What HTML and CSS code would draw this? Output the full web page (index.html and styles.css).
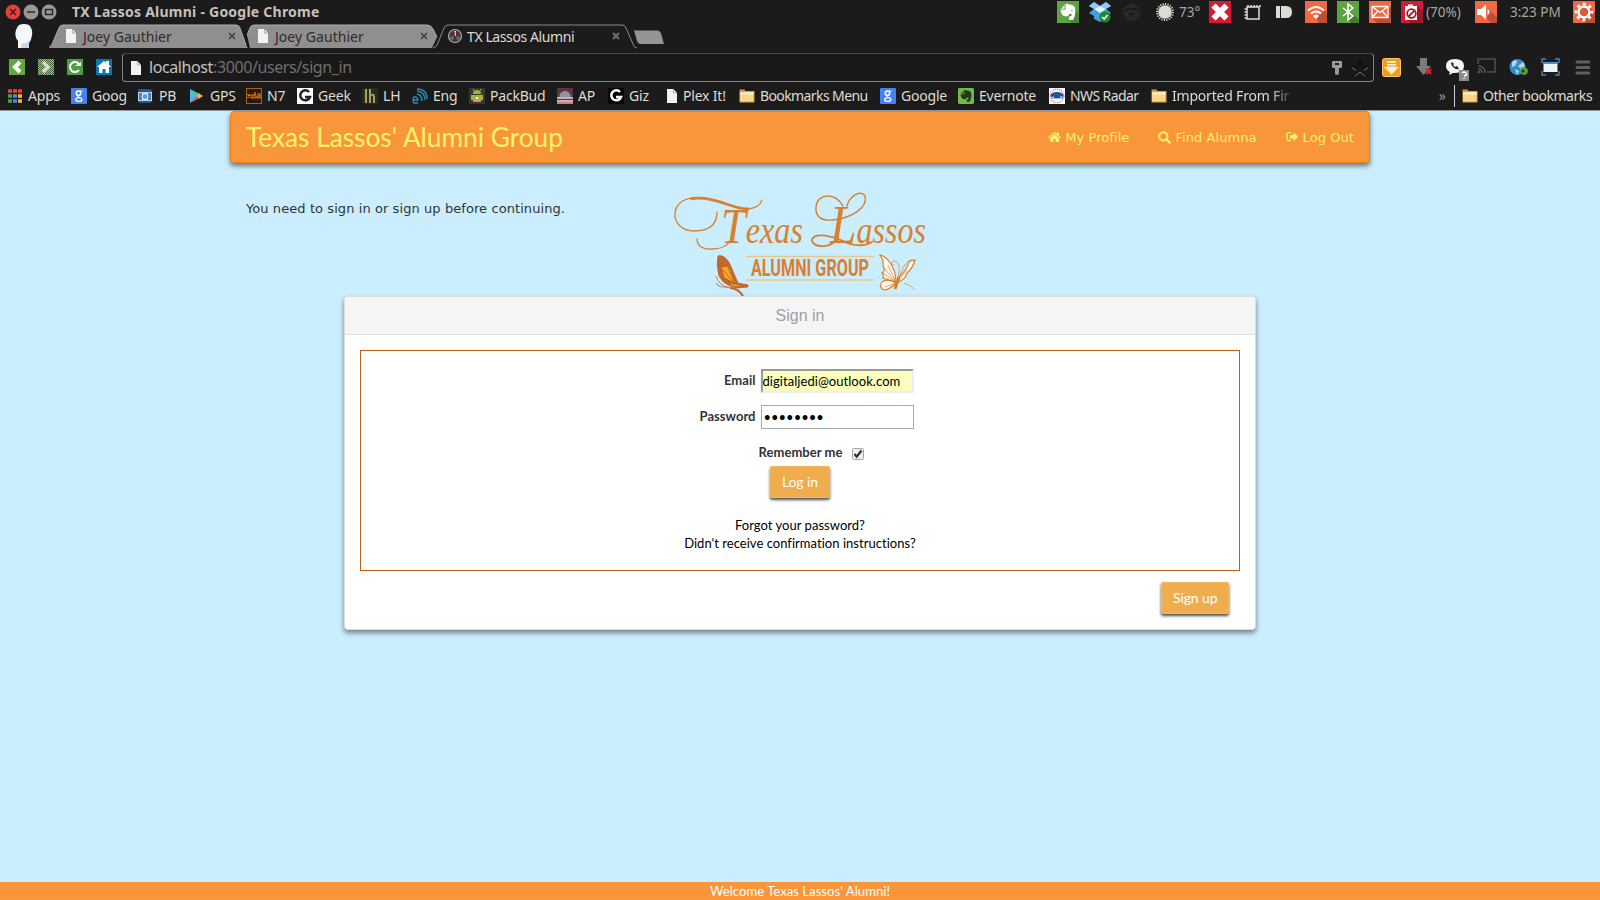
FILE: index.html
```html
<!DOCTYPE html>
<html lang="en">
<head>
<meta charset="utf-8">
<title>TX Lassos Alumni</title>
<link rel="stylesheet" href="styles.css">
</head>
<body>
<svg class="defs" width="0" height="0">
  <symbol id="page" viewBox="0 0 16 16"><path d="M3 1h6.500l3.500 4v10H3z" fill="#f2f2f2"/><path d="M9.500 1v4H13" fill="none" stroke="#999" stroke-width=".8"/></symbol>
  <symbol id="folder" viewBox="0 0 16 16"><path d="M.5 3.500v-2h5l1 1.500h9v11.500H.5z" fill="#d99a3a"/><path d="M1 4h13.500v9.500H1z" fill="#fbd48b"/><path d="M1 4h13.500v3H1z" fill="#ffe6b3"/></symbol>
  <symbol id="goog" viewBox="0 0 16 16"><rect width="16" height="16" rx="1" fill="#4582ef"/><circle cx="7.500" cy="5.200" r="2.200" fill="none" stroke="#fff" stroke-width="1.500"/><path d="M9 3h2.500M8 7.500q-2 1.500 0 2.200" fill="none" stroke="#fff" stroke-width="1.200"/><ellipse cx="7.800" cy="11.500" rx="3" ry="1.900" fill="none" stroke="#fff" stroke-width="1.400"/></symbol>
  <symbol id="eleph" viewBox="0 0 22 22"><path d="M3.500 8.500L8 3.500c1-1 3-1 4 0 3 0 5 1 6 3 1 5 0 9-2 12.500h-3.500c-1.500-2-.5-4 2-4v-2h-2.500c0 2-1.500 2.500-3 2.300-3 0-5-2-5.500-6.800z" fill="#fff"/><path d="M4 8.200h4.200V3.800" fill="none" stroke="#5da343" stroke-width="1"/><path d="M13.500 10q1.500-2 2.500 0z" fill="#5da343"/></symbol>
</svg>

<header class="titlebar">
  <div class="window">
    <svg width="60" height="24" viewBox="0 0 60 24"><circle cx="13" cy="12" r="7.500" fill="#df4140"/><path d="M10 9l6 6m0-6l-6 6" stroke="#4a1512" stroke-width="1.400"/><circle cx="31" cy="12" r="7.500" fill="#9b9893"/><path d="M27 12h8" stroke="#333" stroke-width="1.600"/><circle cx="49" cy="12" r="7.500" fill="#9b9893"/><rect x="45.500" y="9.500" width="7" height="5" fill="none" stroke="#222" stroke-width="1.400"/></svg>
    <span class="window-title">TX Lassos Alumni - Google Chrome</span>
  </div>
  <div class="tray">
    <svg width="22" height="22" viewBox="0 0 22 22"><rect width="22" height="22" fill="#5da343"/><path d="M17 7l5 5v10H14l-3-4z" fill="#4a8735"/><use href="#eleph"/></svg>
    <svg width="22" height="22" viewBox="0 0 22 22"><path d="M5 1l6 4 6-4 5 4-5 3 5 4-5 3v3l-6 3-6-3v-3l-5-3 5-4-5-3z" fill="#469ee0"/><path d="M11 5l6 3-6 4-6-4z" fill="#e5f4ff"/><path d="M5 1l6 4-6 3-5-3zm12 0l5 4-5 3-6-3z" fill="#8ccafa"/><circle cx="16" cy="16" r="5.500" fill="#168d25"/><path d="M13 16l2.200 2 3.500-4" fill="none" stroke="#fff" stroke-width="1.600"/></svg>
    <svg width="22" height="22" viewBox="0 0 22 22"><path d="M1 9q4-6 11-6 6 1 8 7 0 7-8 10-8 0-9-7z" fill="#292929"/><path d="M3 10q8-4 14-1l2 3M9 11v6M9 13h5" fill="none" stroke="#181818" stroke-width="1.500"/></svg>
    <svg width="20" height="22" viewBox="0 0 20 22"><circle cx="10" cy="11" r="8" fill="none" stroke="#dedbd2" stroke-width="2" stroke-dasharray="1.200 1.300"/><circle cx="10" cy="11" r="6.800" fill="#dedbd2"/></svg>
    <span>73°</span>
    <svg width="22" height="22" viewBox="0 0 22 22"><rect width="22" height="22" fill="#d31b35"/><path d="M4.500 4.500l13 13M17.500 4.500l-13 13" stroke="#fff" stroke-width="6"/></svg>
    <svg width="18" height="20" viewBox="0 0 18 20"><path d="M3 5h12v12H3zM4 5V3M7 5V3M10 5V3M13 5V3M16 5V3M3 7H.5M3 10H.5M3 13H.5M3 16H.5" fill="none" stroke="#dedbd2" stroke-width="1.500"/></svg>
    <svg width="18" height="20" viewBox="0 0 18 20"><path d="M0 4h4v12H0zM5 4h5q6 0 6 6t-6 6H5z" fill="#dedbd2"/></svg>
    <svg width="22" height="22" viewBox="0 0 22 22"><rect width="22" height="22" fill="#f06844"/><path d="M11 17l9-8 2 3v10h-8z" fill="#bc4f35"/><path d="M3 9.500q8-7 16 0M6 12.500q5-4 10 0" fill="none" stroke="#fff" stroke-width="2"/><path d="M8 15q3-3 6 0l-3 3z" fill="#fff"/></svg>
    <svg width="22" height="22" viewBox="0 0 22 22"><rect width="22" height="22" fill="#5da343"/><path d="M12 19l5-5 5 5v3h-8z" fill="#43792f"/><path d="M6 7l10 8-5 4V3l5 4-10 8" fill="none" stroke="#fff" stroke-width="1.500"/></svg>
    <svg width="22" height="22" viewBox="0 0 22 22"><rect width="22" height="22" fill="#f06844"/><path d="M19 5l3 3v14H8l-5-5z" fill="#bc4f35"/><path d="M3 5.500h16v11H3zl8 6 8-6M3 16.500l5.500-6M19 16.500l-5.500-6" fill="#f06844" stroke="#fff" stroke-width="1.300"/></svg>
    <svg width="22" height="22" viewBox="0 0 22 22"><rect width="22" height="22" fill="#d31b35"/><path d="M16 5l6 5v12H10l-4-3z" fill="#a01729"/><path d="M4 5h3V3.500h5V5h4v14H4z" fill="#fff"/><circle cx="10.500" cy="12.500" r="5.500" fill="#fff"/><circle cx="10.500" cy="12.500" r="4.300" fill="none" stroke="#a3142b" stroke-width="1.800"/><path d="M7.700 15.300l5.600-5.600" stroke="#a3142b" stroke-width="1.800"/></svg>
    <span>(70%)</span>
    <svg width="22" height="22" viewBox="0 0 22 22"><rect width="22" height="22" fill="#f06844"/><path d="M12 18l3-8 7 6v6h-6z" fill="#bc4f35"/><path d="M2 8h4l5-4.500v15L6 14H2z" fill="#fff"/><path d="M12.500 8q4 3 0 6z" fill="#fff"/></svg>
    <span>3:23 PM</span>
    <svg width="22" height="22" viewBox="0 0 22 22"><rect width="22" height="22" fill="#f06844"/><path d="M17 7l5 5v10H12l-5-4z" fill="#bc4f35"/><circle cx="11" cy="11" r="5.500" fill="#d85c3c" stroke="#fff" stroke-width="2.400"/><circle cx="11" cy="11" r="8" fill="none" stroke="#fff" stroke-width="2.600" stroke-dasharray="3 3.283" stroke-dashoffset="1.500"/></svg>
  </div>
</header>

<div class="tabs">
  <svg class="avatar" width="18" height="24" viewBox="0 0 18 24"><path d="M4 1Q9-1 14 1q4 4 3 10-1 6-3 8v5H3v-7Q-1 13 1 6 2 3 4 1z" fill="#f5f8fb"/><path d="M15 15q-3 5-8 4l-1 5h8v-5z" fill="#c8d8e6"/></svg>
  <div class="tab first">
    <svg class="tab-shape" width="200" height="24" viewBox="0 0 200 24"><path d="M0 24q3-2 4-6l6-14q1-3 4-3h173q3 0 4 3l6 17 2 3z" fill="#8f8f8f"/><path d="M0 23q3-1 4-5l6-14q1-3 4-3h173q3 0 4 3l6 17" fill="none" stroke="#adadad"/></svg>
    <svg width="16" height="16"><use href="#page"/></svg><span>Joey Gauthier</span>
    <svg class="close" width="8" height="8" viewBox="0 0 8 8"><path d="M1 1l6 6m0-6L1 7" stroke="#3e3e3e" stroke-width="1.500"/></svg>
  </div>
  <div class="tab second">
    <svg class="tab-shape" width="192" height="24" viewBox="0 0 192 24"><path d="M0 11l3-7q1-3 4-3h173q4 0 6 4l4 8-5 11H3z" fill="#8f8f8f"/><path d="M0 11l3-7q1-3 4-3h173q4 0 6 4l4 8" fill="none" stroke="#adadad"/></svg>
    <svg width="16" height="16"><use href="#page"/></svg><span>Joey Gauthier</span>
    <svg class="close" width="8" height="8" viewBox="0 0 8 8"><path d="M1 1l6 6m0-6L1 7" stroke="#3e3e3e" stroke-width="1.500"/></svg>
  </div>
  <div class="tab active">
    <svg class="tab-shape" width="208" height="25" viewBox="0 0 208 25"><path d="M0 24q4-1 5-5l6-15q1-3 4-3h174q3 0 4 3l7 16q1 4 4 4" fill="#1b1b1b" stroke="#8d8d8d"/></svg>
    <svg width="16" height="16" viewBox="0 0 16 16"><circle cx="8" cy="8" r="6.500" fill="#3a3a3a" stroke="#aaa" stroke-width="1.200"/><circle cx="5" cy="10" r="2" fill="#666"/><circle cx="11" cy="10" r="2" fill="#666"/><path d="M8 3v5" stroke="#ccc" stroke-width="2"/><path d="M7.500 4v4" stroke="#d33" stroke-width="1.200"/></svg><span>TX Lassos Alumni</span>
    <svg class="close" width="8" height="8" viewBox="0 0 8 8"><path d="M1 1l6 6m0-6L1 7" stroke="#727272" stroke-width="2"/></svg>
  </div>
  <svg class="new-tab" width="31" height="15" viewBox="0 0 31 15"><path d="M0 .5h23q3 0 4 3l3 10.500H7q-3 0-4-3z" fill="#949494"/></svg>
</div>

<div class="toolbar">
  <svg width="16" height="16" viewBox="0 0 16 16"><rect width="16" height="16" fill="#62a83c"/><path d="M11 3L6 8l5 5" stroke="#fff" stroke-width="4" fill="none"/></svg>
  <svg width="16" height="16" viewBox="0 0 16 16"><rect width="16" height="16" fill="#3f6330"/><path d="M0 .5h16M0 2.500h16M0 4.500h16M0 6.500h16M0 8.500h16M0 10.500h16M0 12.500h16M0 14.500h16" stroke="#a9bba2" stroke-dasharray="1 1"/><path d="M1 1.500h15M1 3.500h15M1 5.500h15M1 7.500h15M1 9.500h15M1 11.500h15M1 13.500h15M1 15.500h15" stroke="#a9bba2" stroke-dasharray="1 1"/><path d="M5 3l5 5-5 5" stroke="#d5ddd1" stroke-width="3.500" fill="none"/></svg>
  <svg width="16" height="16" viewBox="0 0 16 16"><rect width="16" height="16" fill="#4f9c45"/><path d="M12 11a5 5 0 1 1 0-6" stroke="#fff" stroke-width="2" fill="none"/><path d="M8 7h6V3z" fill="#fff"/></svg>
  <svg width="16" height="16" viewBox="0 0 16 16"><rect width="16" height="16" fill="#0878b5"/><path d="M1 8l7-6 2 1.500V2h3v4l2 2h-2v6H9.500v-4h-3v4H3V8z" fill="#fff"/></svg>
  <div class="omnibox">
    <svg width="16" height="16"><use href="#page"/></svg>
    <span class="url"><b>localhost</b>:3000/users/sign_in</span>
    <svg width="12" height="16" viewBox="0 0 12 16"><path d="M1 2q0-1 1-1h8q1 0 1 1v5q0 1-1 1H8v5q0 2-2 2t-2-2V8H2Q1 8 1 7z" fill="#9a9a9a"/><path d="M4 3h4v2H4z" fill="#222"/></svg>
    <svg width="18" height="18" viewBox="0 0 18 18"><path d="M9 1l2 6h6l-5 4 2 6-5-4-5 4 2-6-5-4h6z" fill="#151515" stroke="#0c0c0c"/><path d="M1 8.500L5.500 11.500M17 8.500L12.500 11.500M4 17l5-4 5 4" fill="none" stroke="#777"/></svg>
  </div>
  <div class="extensions">
    <svg width="19" height="19" viewBox="0 0 19 19"><rect x=".5" y=".5" width="18" height="18" rx="2" fill="#f49b1d" stroke="#ffc56c"/><path d="M5 3h9v6h3l-7.500 7.500L2 9h3z" fill="#fff0cf"/><path d="M5 5.500h9M5 8h9" stroke="#f49b1d"/></svg>
    <svg width="18" height="18" viewBox="0 0 18 18"><path d="M5 0h7v8h4l-7.500 9L1 8h4z" fill="#777c81"/><path d="M11 11l5 5m0-5l-5 5" stroke="#e1252c" stroke-width="2"/></svg>
    <svg width="24" height="23" viewBox="0 0 24 23"><path d="M10 1q9 0 9 7t-9 7H8l-4 2 1-3Q1 12 1 8q0-7 9-7z" fill="#f5f5f5"/><path d="M7 4q-2 2 1 5t6 2l-2-3-2 1-2-2 1-1z" fill="#222"/><rect x="14" y="12" width="10" height="11" fill="#8b8b8b"/><path d="M17 15q2-2 4 0t-2 3m0 2v1" fill="none" stroke="#fff" stroke-width="1.500"/></svg>
    <svg width="19" height="16" viewBox="0 0 19 16"><path d="M1 6V1h17v13h-8" fill="none" stroke="#4d4d4d" stroke-width="1.600"/><path d="M1 8q7 0 7 7M1 11q4 0 4 4" fill="none" stroke="#555" stroke-width="1.500"/><circle cx="2" cy="14" r="1.300" fill="#555"/></svg>
    <svg width="19" height="18" viewBox="0 0 19 18"><circle cx="8.500" cy="9" r="8" fill="#2f8dcc"/><path d="M3 4q4-4 5 0L6 8l-3 1zm6 4l5-4 2 4-4 3zM6 11l4 2-2 4z" fill="#aed9ed"/><path d="M10 13l3-4q6 0 6 4t-5 4z" fill="#649b2e"/><circle cx="14" cy="13" r="1.500" fill="#263e15"/></svg>
    <svg width="19" height="18" viewBox="0 0 19 18"><path d="M1 5V1h4M14 1h4v4M18 13v4h-4M5 17H1v-4" fill="none" stroke="#4b82b4" stroke-width="1.400"/><rect x="2.500" y="4" width="14" height="10" fill="#eef3f7"/><path d="M2.500 4h14v2h-14z" fill="#4b91d2"/></svg>
    <svg width="16" height="18" viewBox="0 0 16 18"><path d="M3 4h12M3 9.500h12M3 15h12" stroke="#606060" stroke-width="3" stroke-linecap="round"/></svg>
  </div>
</div>

<nav class="bookmarks">
  <a><svg width="14" height="16" viewBox="0 0 14 16"><path d="M0 3h14" stroke="#e94336" stroke-width="3.500" stroke-dasharray="4 1"/><path d="M0 8h4M0 13h4" stroke="#35a853" stroke-width="3.500"/><path d="M5 8h4M5 13h4" stroke="#4a88ef" stroke-width="3.500"/><path d="M10 8h4M10 13h4" stroke="#fabc12" stroke-width="3.500"/></svg>Apps</a>
  <a><svg width="16" height="16"><use href="#goog"/></svg>Goog</a>
  <a><svg width="16" height="16" viewBox="0 0 16 16"><rect x="0" y="1" width="14" height="14" rx="2" fill="#235795"/><rect x="0" y="4" width="14" height="9" fill="#b6d5f0"/><path d="M1 5h3v7H1zm9 0h3v7h-3z" fill="#4a7fb8"/><circle cx="7" cy="8.500" r="3" fill="#6197ca" stroke="#fff"/></svg>PB</a>
  <a><svg width="16" height="16" viewBox="0 0 16 16"><path d="M1 1l9 7-9 7z" fill="#43bfe6"/><path d="M1 1l10 5-3 2z" fill="#52c374"/><path d="M1 15l10-5-3-2z" fill="#e8535b"/><path d="M10 5.500l4 2.500-4 2.500L8 8z" fill="#f3ba5c"/></svg>GPS</a>
  <a><svg width="16" height="16" viewBox="0 0 16 16"><rect x=".5" y=".5" width="15" height="15" fill="#2c1700" stroke="#a6641a"/><path d="M1.500 6l3 4m0-4l-3 4M9 4v6H6V7h3M11 6h3v4h-3V8h3" fill="none" stroke="#f28716" stroke-width="1.200"/></svg>N7</a>
  <a><svg width="16" height="16" viewBox="0 0 16 16"><rect width="16" height="16" fill="#fff"/><path d="M12 4a5 5 0 1 0 1 5H8" fill="none" stroke="#222" stroke-width="2.500"/></svg>Geek</a>
  <a><svg width="16" height="16" viewBox="0 0 16 16"><rect width="16" height="16" fill="#292b21"/><path d="M4 1v14M8 1v14M8 8q4-3 4 1v6" fill="none" stroke="#a7a056" stroke-width="2"/></svg>LH</a>
  <a><svg width="16" height="16" viewBox="0 0 16 16"><path d="M1 12h5q-1-4-4-3-2 3 0 6h4M5 6q5 1 5 7M5 3q8 1 8 9M5 1q10 0 10 10" fill="none" stroke="#288bb8" stroke-width="1.400"/></svg>Eng</a>
  <a><svg width="16" height="16" viewBox="0 0 16 16"><rect width="16" height="16" fill="#373737"/><path d="M4 6q0-4 4-4t4 4zm-2 1h12v5H2z" fill="#91be24"/><path d="M4 1l1 2m7-2l-1 2" stroke="#91be24"/><path d="M4 9h8v5H4z" fill="#d4984e"/><path d="M7 9h2v2H7z" fill="#fff"/></svg>PackBud</a>
  <a><svg width="16" height="16" viewBox="0 0 16 16"><rect width="16" height="16" fill="#5e3440"/><path d="M2 9q1-6 6-6t6 6z" fill="#8b93a5"/><path d="M0 10h16M0 13h16" stroke="#e9d6e0" stroke-width="1.500"/><path d="M0 15h16" stroke="#d57888" stroke-width="2"/></svg>AP</a>
  <a><svg width="16" height="16" viewBox="0 0 16 16"><rect width="16" height="16" fill="#050505"/><path d="M12 4a5 5 0 1 0 1 5H8" fill="none" stroke="#fff" stroke-width="2.500"/></svg>Giz</a>
  <a class="tight"><svg width="16" height="16"><use href="#page"/></svg>Plex It!</a>
  <a class="narrow"><svg width="16" height="16"><use href="#folder"/></svg>Bookmarks Menu</a>
  <a><svg width="16" height="16"><use href="#goog"/></svg>Google</a>
  <a><svg width="16" height="16" viewBox="0 0 22 22"><rect width="22" height="22" rx="2" fill="#71ba43"/><path d="M3.500 8.500L8 3.500c1-1 3-1 4 0 3 0 5 1 6 3 1 5 0 9-2 12.500h-3.500c-1.500-2-.5-4 2-4v-2h-2.500c0 2-1.500 2.500-3 2.300-3 0-5-2-5.500-6.800z" fill="#263521"/><path d="M4 8.200h4.200V3.800" fill="none" stroke="#71ba43"/></svg>Evernote</a>
  <a class="narrow"><svg width="16" height="16" viewBox="0 0 16 16"><rect width="16" height="16" fill="#fff"/><circle cx="8" cy="8" r="6.800" fill="none" stroke="#df7580" stroke-width="1.500" stroke-dasharray="1 1"/><ellipse cx="8" cy="7.500" rx="6.500" ry="3.500" fill="#1d579b"/><path d="M2 9l4-1 2 2 3-2 4 1v2H2z" fill="#8ec3e4"/><path d="M5 8h6v2H5z" fill="#1d579b"/></svg>NWS Radar</a>
  <a class="fade"><svg width="16" height="16"><use href="#folder"/></svg>Imported From Fir</a>
  <span class="more">»</span>
  <a class="other narrow"><svg width="16" height="16"><use href="#folder"/></svg>Other bookmarks</a>
</nav>

<main>
  <div class="navbar">
    <h1>Texas Lassos' Alumni Group</h1>
    <div class="links">
      <a><svg width="13" height="12" viewBox="0 0 13 12"><path d="M0 6.500L6.500 1 9 3V1.500h2v3.200l2 1.800-.7.800L6.500 2.600.7 7.300z"/><path d="M2 7.300l4.500-3.700L11 7.300V11H7.600V8H5.400v3H2z"/></svg>My Profile</a>
      <a><svg width="13" height="13" viewBox="0 0 13 13"><circle cx="5.300" cy="5.300" r="4.100" fill="none" stroke="#fff369" stroke-width="2"/><path d="M8.500 8.500l3.300 3.300" stroke="#fff369" stroke-width="2.200" stroke-linecap="round"/></svg>Find Alumna</a>
      <a><svg width="13" height="12" viewBox="0 0 13 12"><path d="M5 1.700H2.500Q1 1.700 1 3v5q0 1.500 1.500 1.500H5" fill="none" stroke="#fff369" stroke-width="1.300"/><path d="M4 4h3.500V1.200L12.200 5.700 7.500 10.200V7.500H4z"/></svg>Log Out</a>
    </div>
  </div>
  <div class="intro">
    <p>You need to sign in or sign up before continuing.</p>
    <svg class="logo" width="256" height="107" viewBox="672 190 256 107">
      <g fill="none" stroke="#d8802e" stroke-linecap="round">
        <path d="M717 212C717 228 704 231 694 231 682 231 675 223 675 215 675 202 686 197 700 198" stroke-width="1.300"/>
        <path d="M692 198.500C717 196 731 209 748 209" stroke-width="2.800"/>
        <path d="M746 209C755 209 760 206 762 200" stroke-width="1.200"/>
        <path d="M697 239C697 246 703 250 712 249 721 249 727 246 730 241" stroke-width="1.300"/>
        <path d="M843 206C835 192 817 193 816 207 815 217 822 221 832 220 853 218 868 207 865 196 861 190 850 195 847 206" stroke-width="1.400"/>
        <path d="M838 238C831 249 812 248 812 240 814 231 835 237 843 241 854 247 866 246 872 242" stroke-width="1.800"/>
      </g>
      <g font-family="Liberation Serif, serif" font-style="italic" fill="#d8802e">
        <text x="721" y="243" textLength="82" lengthAdjust="spacingAndGlyphs"><tspan font-size="51">T</tspan><tspan font-size="37">exas</tspan></text>
        <text x="830" y="243" textLength="96" lengthAdjust="spacingAndGlyphs"><tspan font-size="55">L</tspan><tspan font-size="37">assos</tspan></text>
      </g>
      <path d="M746 256.500h128M746 280h128" stroke="#edc783" stroke-width="1.500"/>
      <text x="751" y="276" font-family="Roboto, sans-serif" font-weight="700" font-size="23" fill="#d8802e" textLength="118" lengthAdjust="spacingAndGlyphs">ALUMNI GROUP</text>
      <g stroke="#be642e"><path d="M718 256C723 254 729 260 732 269L738 283 748 285 748 287 738 288Q724 286 719 276 716 265 718 256z" fill="#c2672d" stroke-width=".8"/><path d="M721 267l8-1 7 18-12-6zm8 15l14 4-10 1z" fill="#f6a928"/><path d="M722 269l13 15M728 267l7 17M721 276l14 9" fill="none"/><path d="M730 288q8 0 13 8" fill="none" stroke-width="2"/><path d="M730 288q-11-2-14-12m13 11q-11 1-13-4" fill="none" stroke-width=".8"/></g>
      <g stroke="#d8802e" fill="#fff9f0" stroke-width="1.200"><path d="M880 255q7 2 11 9 5 8 5 18l-13-4q1-3-1-5 4-2 1-7 1-5-3-11z"/><path d="M896 283q-8-5-14-1-4 5 2 8 5 0 12-7zm4-7q8-8 9-14 2-2 6-2-2 8-8 13 0 5-10 10z"/><path d="M896 282l-13-15m13 15l-8-17m8 17l-13-9m13 10l-11 4m12-5l10-12" fill="none" stroke-width=".7"/><path d="M895 289l4-12" stroke-width="3"/><path d="M898 278q4-19-5-17-3 3 1 4m6 11q5-14 5-10 4-9 10-5m-11 22q10 4 10 7" fill="none" stroke-width=".7"/></g>
    </svg>
  </div>
  <section class="panel">
    <h2>Sign in</h2>
    <div class="panel-body">
      <form class="fields">
        <div class="row"><label for="email">Email</label><input id="email" type="text" value="digitaljedi@outlook.com"></div>
        <div class="row password"><label for="pw">Password</label><input id="pw" type="text" value="••••••••"></div>
        <div class="remember"><span>Remember me</span><svg width="12" height="12" viewBox="0 0 12 12"><rect x=".5" y=".5" width="11" height="11" rx="1" fill="#eee" stroke="#a6a6a6"/><path d="M2.500 6l2.200 2.700L9.500 2.500" fill="none" stroke="#333" stroke-width="2.200"/></svg></div>
        <button class="button login" type="button">Log in</button>
        <a>Forgot your password?</a>
        <a>Didn't receive confirmation instructions?</a>
      </form>
      <button class="button signup" type="button">Sign up</button>
    </div>
  </section>
</main>
<footer>Welcome Texas Lassos' Alumni!</footer>
</body>
</html>
```
FILE: styles.css
```css
* { box-sizing: border-box; }
body { margin: 0; width: 1600px; height: 900px; overflow: hidden; display: flex; flex-direction: column; background: #caeefe; font-family: Lato, sans-serif; font-variant-ligatures: none; }
svg { display: block; flex: none; }
.defs { position: absolute; }
.titlebar, .tabs, .toolbar, .bookmarks { background: #1b1b1b; font-family: "Noto Sans", sans-serif; color: #dfdbd2; white-space: nowrap; flex: none; }
.titlebar { height: 24px; display: flex; justify-content: space-between; }
.window { display: flex; align-items: center; }
.window-title { margin: -1px 0 0 12px; font-size: 14px; font-weight: 700; color: #c4c1ba; letter-spacing: .24px; }
.tray { display: grid; grid-template-columns: 32px 32px 34px 24px 30px 35px 32px 29px 32px 32px 32px 25px 49px 35px 63px 22px; align-items: center; padding-right: 5px; font-size: 13.500px; color: #aaa79f; }

.tabs { height: 25px; display: flex; font-size: 14px; }
.avatar { margin: 0 16px 0 15px; }
.tab { position: relative; display: flex; align-items: center; height: 24px; color: #342929; }
.tab > :not(.tab-shape) { position: relative; }
.tab-shape { position: absolute; left: 0; top: 0; }
.tab span { margin-left: 4px; letter-spacing: .03px; }
.first { width: 198px; padding-left: 14px; }
.second { width: 186px; padding-left: 8px; }
.active { width: 202px; padding-left: 14px; color: #dfdbd2; }
.tab.active span { letter-spacing: -.4px; }
.close { margin-left: auto; margin-right: 11px; }
.second .close { margin-right: 5px; }
.active .close { margin-right: 15px; }
.new-tab { margin: 6px 0 0 -1px; }

.toolbar { height: 33px; display: flex; align-items: flex-start; padding: 10px 7px 0 9px; gap: 13px; }
.omnibox { width: 1252px; height: 29px; margin: -6px 0 0 -3px; border: 1px solid #858585; border-top-color: #4a4a4a; border-radius: 4px; display: flex; align-items: center; padding: 0 4px 0 5px; background: #191919; }
.url { margin: -2px auto 0 5px; font-size: 16px; color: #716f6b; letter-spacing: -.4px; }
.url b { font-weight: 400; color: #c6c2ba; }
.omnibox svg:nth-last-child(2) { margin-right: 8px; }
.extensions { display: grid; grid-template-columns: 33px 30px 32px 32px 32px 33px 16px; margin: -1px 0 0 -5px; width: 210px; }

.bookmarks { height: 29px; border-bottom: 1px solid #999; padding: 0 0 1px 8px; display: grid; grid-template-columns: 63px 67px 51px 57px 51px 65px 50px 57px 88px 51px 56px 75px 141px 78px 91px 102px 140px 163px auto; align-items: center; font-size: 14px; }
.bookmarks a { display: flex; align-items: center; gap: 5px; letter-spacing: -.2px; }
.bookmarks a:first-child { gap: 6px; }
.bookmarks .tight { gap: 3px; }
.bookmarks .narrow { letter-spacing: -.6px; }
.fade { -webkit-mask-image: linear-gradient(90deg, #000 85%, transparent 103%); mask-image: linear-gradient(90deg, #000 85%, transparent 103%); }
.more { justify-self: end; margin-right: 8px; color: #999; }
.bookmarks .other { border-left: 1px solid #ccc; padding-left: 7px; height: 22px; letter-spacing: -.45px; }

main { flex: 1; display: flex; flex-direction: column; align-items: center; }
.navbar { width: 1140px; height: 52px; padding: 0 15px; display: flex; justify-content: space-between; align-items: center; border: 1px solid #f6810f; border-radius: 4px; background: #f9963b; box-shadow: 0 3px 5px rgba(0,0,0,.5); color: #fff369; }
h1 { margin: 0; font-size: 26.250px; font-weight: 400; }
.links { display: flex; gap: 29px; font: 13px "DejaVu Sans", sans-serif; letter-spacing: .07px; }
.links a { display: flex; align-items: center; gap: 4px; }
.links svg { fill: #fff369; }
.intro { width: 1140px; height: 133px; padding: 27px 16px 0; display: grid; grid-template-columns: 426px 256px; }
.intro p { margin: 10px 0 0; font: 13px/18px "DejaVu Sans", sans-serif; letter-spacing: .08px; color: #333; }
.logo { overflow: visible; }
.panel { width: 912px; height: 334px; border: 1px solid #ddd; border-radius: 4px; background: #fff; box-shadow: 0 3px 5px rgba(0,0,0,.45); }
h2 { margin: 0; height: 38px; border-bottom: 1px solid #ddd; border-radius: 3px 3px 0 0; background: #f5f5f5; color: #a0a0a0; font: 16px/37px "Liberation Sans", sans-serif; text-align: center; }
.panel-body { padding: 15px; display: flex; flex-direction: column; }
.fields { height: 221px; border: 1px solid #bd6011; padding-top: 18px; display: flex; flex-direction: column; align-items: center; font-size: 13px; line-height: 18px; color: #000; letter-spacing: .03px; }
.row { display: grid; grid-template-columns: 316px 153px; gap: 5px; align-items: center; height: 24px; margin-right: 247px; margin-bottom: 12px; }
.row label { margin-top: -2px; text-align: right; font-weight: 700; color: #333; }
.row input { width: 153px; height: 24px; padding: 1px 0; border: 2px inset #eee; background: #faffbd; font: 13px Lato, sans-serif; letter-spacing: .05px; color: #000; }
.row.password input { border: 1px solid #a9a9a9; background: #fff; padding-left: 2px; letter-spacing: 0; }
.remember { height: 25px; padding-top: 2px; display: flex; gap: 10px; margin-left: 23px; font-weight: 700; color: #333; }
.remember svg { margin-top: 5px; }
.button { height: 32px; padding: 0 11px 2px; border: 1px solid #f2b963; border-radius: 2px; background: #f0ad4e; box-shadow: 0 2px 3px rgba(0,0,0,.7); color: #fff; font: 14px Lato, sans-serif; letter-spacing: -.1px; }
.login { margin-bottom: 18px; }
.signup { align-self: flex-end; margin: 11px 11px 0; padding: 0 10.500px 2px; }
footer { height: 18px; flex: none; background: #f9963b; color: #fff; font-size: 13px; line-height: 18px; text-align: center; letter-spacing: .07px; }
```
